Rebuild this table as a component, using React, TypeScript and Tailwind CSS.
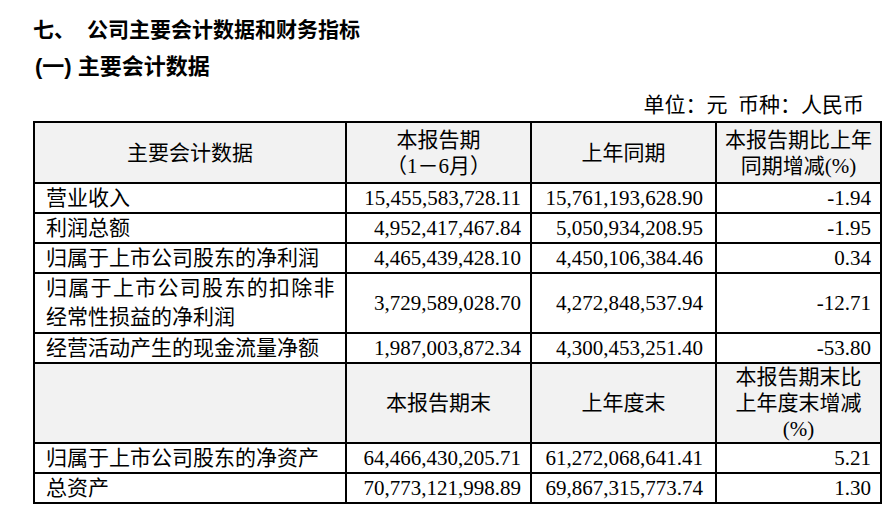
import React from "react";

const font = { fontFamily: "'Liberation Serif', 'Noto Sans CJK SC', serif" };
const heading = { fontFamily: "'Liberation Sans', 'Noto Sans CJK SC', sans-serif" };

const periodRows = [
    { name: "营业收入", cur: "15,455,583,728.11", prev: "15,761,193,628.90", pct: "-1.94" },
    { name: "利润总额", cur: "4,952,417,467.84", prev: "5,050,934,208.95", pct: "-1.95" },
    { name: "归属于上市公司股东的净利润", cur: "4,465,439,428.10", prev: "4,450,106,384.46", pct: "0.34" },
];

const balanceRows = [
    { name: "归属于上市公司股东的净资产", cur: "64,466,430,205.71", prev: "61,272,068,641.41", pct: "5.21" },
    { name: "总资产", cur: "70,773,121,998.89", prev: "69,867,315,773.74", pct: "1.30" },
];

function DataRow({ name, cur, prev, pct }: { name: string; cur: string; prev: string; pct: string }) {
    return (
        <tr className="h-[30px]">
            <td className="border-2 border-black pl-[11px] align-middle">{name}</td>
            <td className="border-2 border-black pr-[9px] text-right align-middle">{cur}</td>
            <td className="border-2 border-black pr-[12px] text-right align-middle">{prev}</td>
            <td className="border-2 border-black pr-[9px] text-right align-middle">{pct}</td>
        </tr>
    );
}

export default function App() {
    return (
        <div className="w-[894px] h-[510px] bg-white text-black overflow-hidden" style={font}>
            <div className="pl-[33px] pt-[15px] text-[21px] leading-[30px] font-bold" style={heading}>
                七、<span className="ml-[12px]">公司主要会计数据和财务指标</span>
            </div>
            <div className="pl-[35px] mt-[7px] text-[22px] leading-[30px] font-bold" style={heading}>
                (一) 主要会计数据
            </div>
            <div className="mt-[8px] pr-[30px] text-right text-[21px] leading-[30px]">
                单位：元&nbsp;&nbsp;币种：人民币
            </div>

            <table className="ml-[33px] mt-[1px] w-[847px] table-fixed border-collapse border-2 border-black text-[21px] leading-[26px]">
                <colgroup>
                    <col className="w-[312px]" />
                    <col className="w-[185px]" />
                    <col className="w-[185px]" />
                    <col className="w-[165px]" />
                </colgroup>
                <tbody>
                    <tr className="h-[61px] bg-[#f2f2f2]">
                        <td className="border-2 border-black text-center align-middle">主要会计数据</td>
                        <td className="border-2 border-black text-center align-middle">
                            <div>本报告期</div>
                            <div>（1－6月）</div>
                        </td>
                        <td className="border-2 border-black text-center align-middle">上年同期</td>
                        <td className="border-2 border-black text-center align-middle">
                            <div>本报告期比上年</div>
                            <div>同期增减(%)</div>
                        </td>
                    </tr>
                    {periodRows.map((r) => (
                        <DataRow key={r.name} {...r} />
                    ))}
                    <tr className="h-[56px]">
                        <td className="border-2 border-black pl-[11px] align-middle leading-[29px]">
                            <div className="tracking-[1.3px] whitespace-nowrap">归属于上市公司股东的扣除非</div>
                            <div>经常性损益的净利润</div>
                        </td>
                        <td className="border-2 border-black pr-[9px] text-right align-middle">3,729,589,028.70</td>
                        <td className="border-2 border-black pr-[12px] text-right align-middle">4,272,848,537.94</td>
                        <td className="border-2 border-black pr-[9px] text-right align-middle">-12.71</td>
                    </tr>
                    <DataRow
                        name="经营活动产生的现金流量净额"
                        cur="1,987,003,872.34"
                        prev="4,300,453,251.40"
                        pct="-53.80"
                    />
                    <tr className="h-[80px] bg-[#f2f2f2]">
                        <td className="border-2 border-black" />
                        <td className="border-2 border-black text-center align-middle">本报告期末</td>
                        <td className="border-2 border-black text-center align-middle">上年度末</td>
                        <td className="border-2 border-black text-center align-middle">
                            <div>本报告期末比</div>
                            <div>上年度末增减</div>
                            <div>(%)</div>
                        </td>
                    </tr>
                    {balanceRows.map((r) => (
                        <DataRow key={r.name} {...r} />
                    ))}
                </tbody>
            </table>
        </div>
    );
}
